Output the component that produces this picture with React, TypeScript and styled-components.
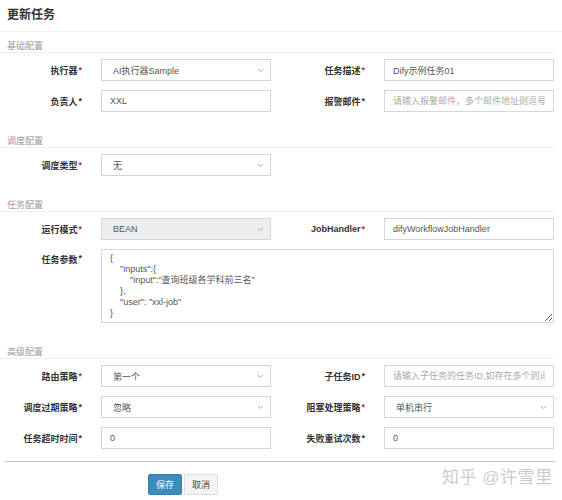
import styled, { createGlobalStyle } from "styled-components";

const GlobalStyle = createGlobalStyle`
  body {
    margin: 0;
    background: #fff;
    font-family: "Liberation Sans", "Noto Sans CJK SC", sans-serif;
    color: #333;
  }
`;

const Page = styled.div`
  position: relative;
  width: 562px;
  height: 500px;
  overflow: hidden;
`;

const Header = styled.div`
  height: 32px;
  padding: 0 7px;
  display: flex;
  align-items: center;
  box-sizing: border-box;
  padding-bottom: 4px;
  border-bottom: 1px solid #f2f2f2;
  font-size: 12px;
  font-weight: bold;
  color: #333;
`;

const Form = styled.div`
  padding-right: 7px;
`;

const Legend = styled.div<{ $first?: boolean }>`
  margin-top: ${(p) => (p.$first ? 8 : 23)}px;
  padding-left: 7px;
  height: 12px;
  line-height: 12px;
  font-size: 9px;
  color: #999;
  border-bottom: 1px solid #eeeeee;
`;

const Rows = styled.div`
  display: grid;
  grid-template-columns: 101px 170px 113px 170px;
  row-gap: 9px;
  padding-top: 6px;
`;

const Label = styled.label`
  padding-right: 19px;
  height: 22px;
  display: flex;
  align-items: center;
  justify-content: flex-end;
  font-size: 9px;
  font-weight: bold;
  color: #333;
  white-space: nowrap;
`;

const TopLabel = styled(Label)`
  align-items: flex-start;
  padding-top: 4px;
  height: auto;
`;

const Star = styled.span<{ $red?: boolean }>`
  color: ${(p) => (p.$red ? "#c7254e" : "#333")};
  margin-left: 1px;
`;

const TextInput = styled.input`
  box-sizing: border-box;
  width: 170px;
  height: 22px;
  padding: 0 8px;
  border: 1px solid #d2d6de;
  background: #fff;
  font-family: inherit;
  font-size: 9px;
  color: #555;
  outline: none;

  &::placeholder {
    color: #aaa;
  }
`;

const SelectBox = styled.div<{ $disabled?: boolean }>`
  box-sizing: border-box;
  width: 170px;
  height: 22px;
  padding: 0 6px 0 11px;
  border: 1px solid #d2d6de;
  background: ${(p) => (p.$disabled ? "#eeeeee" : "#fff")};
  display: flex;
  align-items: center;
  justify-content: space-between;
  font-size: 9px;
  color: #555;
`;

const Params = styled.textarea`
  grid-column: 2 / 5;
  box-sizing: border-box;
  height: 74px;
  padding: 3px 8px;
  border: 1px solid #d2d6de;
  font-family: inherit;
  font-size: 9px;
  line-height: 11px;
  color: #555;
  outline: none;
  resize: vertical;
`;

const Divider = styled.div`
  margin: 12px 7px 0 5px;
  border-top: 1px solid #c4c4c4;
`;

const Actions = styled.div`
  display: flex;
  gap: 2px;
  padding: 12px 0 0 148px;
`;

const Button = styled.button<{ $primary?: boolean }>`
  width: 34px;
  height: 21px;
  padding: 0;
  border: 1px solid ${(p) => (p.$primary ? "#367fa9" : "#ddd")};
  border-radius: 2px;
  background: ${(p) => (p.$primary ? "#3c8dbc" : "#f4f4f4")};
  color: ${(p) => (p.$primary ? "#fff" : "#444")};
  font-family: inherit;
  font-size: 9px;
`;

const Watermark = styled.div`
  position: absolute;
  left: 442px;
  top: 463px;
  font-size: 17px;
  color: rgba(150, 150, 150, 0.5);
  letter-spacing: 0.5px;
  white-space: nowrap;
`;

function Chevron() {
  return (
    <svg width="7" height="5" viewBox="0 0 7 5">
      <path d="M1 1l2.5 2.5L6 1" fill="none" stroke="#999" strokeWidth="0.8" />
    </svg>
  );
}

function Field({ text, red }: { text: string; red?: boolean }) {
  return (
    <Label>
      {text}
      <Star $red={red}>*</Star>
    </Label>
  );
}

function Select({ value, disabled }: { value: string; disabled?: boolean }) {
  return (
    <SelectBox $disabled={disabled}>
      <span>{value}</span>
      <Chevron />
    </SelectBox>
  );
}

const params = `{
    "inputs":{
        "input":"查询班级各学科前三名"
    },
    "user": "xxl-job"
}`;

export default function App() {
  return (
    <Page>
      <GlobalStyle />
      <Header>更新任务</Header>
      <Form>
        <Legend $first>基础配置</Legend>
        <Rows>
          <Field text="执行器" red />
          <Select value="AI执行器Sample" />
          <Field text="任务描述" red />
          <TextInput defaultValue="Dify示例任务01" />
          <Field text="负责人" />
          <TextInput defaultValue="XXL" />
          <Field text="报警邮件" />
          <TextInput placeholder="请输入报警邮件，多个邮件地址则逗号分隔" />
        </Rows>

        <Legend>调度配置</Legend>
        <Rows>
          <Field text="调度类型" red />
          <Select value="无" />
        </Rows>

        <Legend>任务配置</Legend>
        <Rows>
          <Field text="运行模式" red />
          <Select value="BEAN" disabled />
          <Field text="JobHandler" red />
          <TextInput defaultValue="difyWorkflowJobHandler" />
          <TopLabel>
            任务参数<Star>*</Star>
          </TopLabel>
          <Params defaultValue={params} />
        </Rows>

        <Legend>高级配置</Legend>
        <Rows>
          <Field text="路由策略" red />
          <Select value="第一个" />
          <Field text="子任务ID" />
          <TextInput placeholder="请输入子任务的任务ID,如存在多个则逗号分隔" />
          <Field text="调度过期策略" />
          <Select value="忽略" />
          <Field text="阻塞处理策略" red />
          <Select value="单机串行" />
          <Field text="任务超时时间" />
          <TextInput defaultValue="0" />
          <Field text="失败重试次数" />
          <TextInput defaultValue="0" />
        </Rows>
      </Form>
      <Divider />
      <Actions>
        <Button $primary>保存</Button>
        <Button>取消</Button>
      </Actions>
      <Watermark>知乎 @许雪里</Watermark>
    </Page>
  );
}
